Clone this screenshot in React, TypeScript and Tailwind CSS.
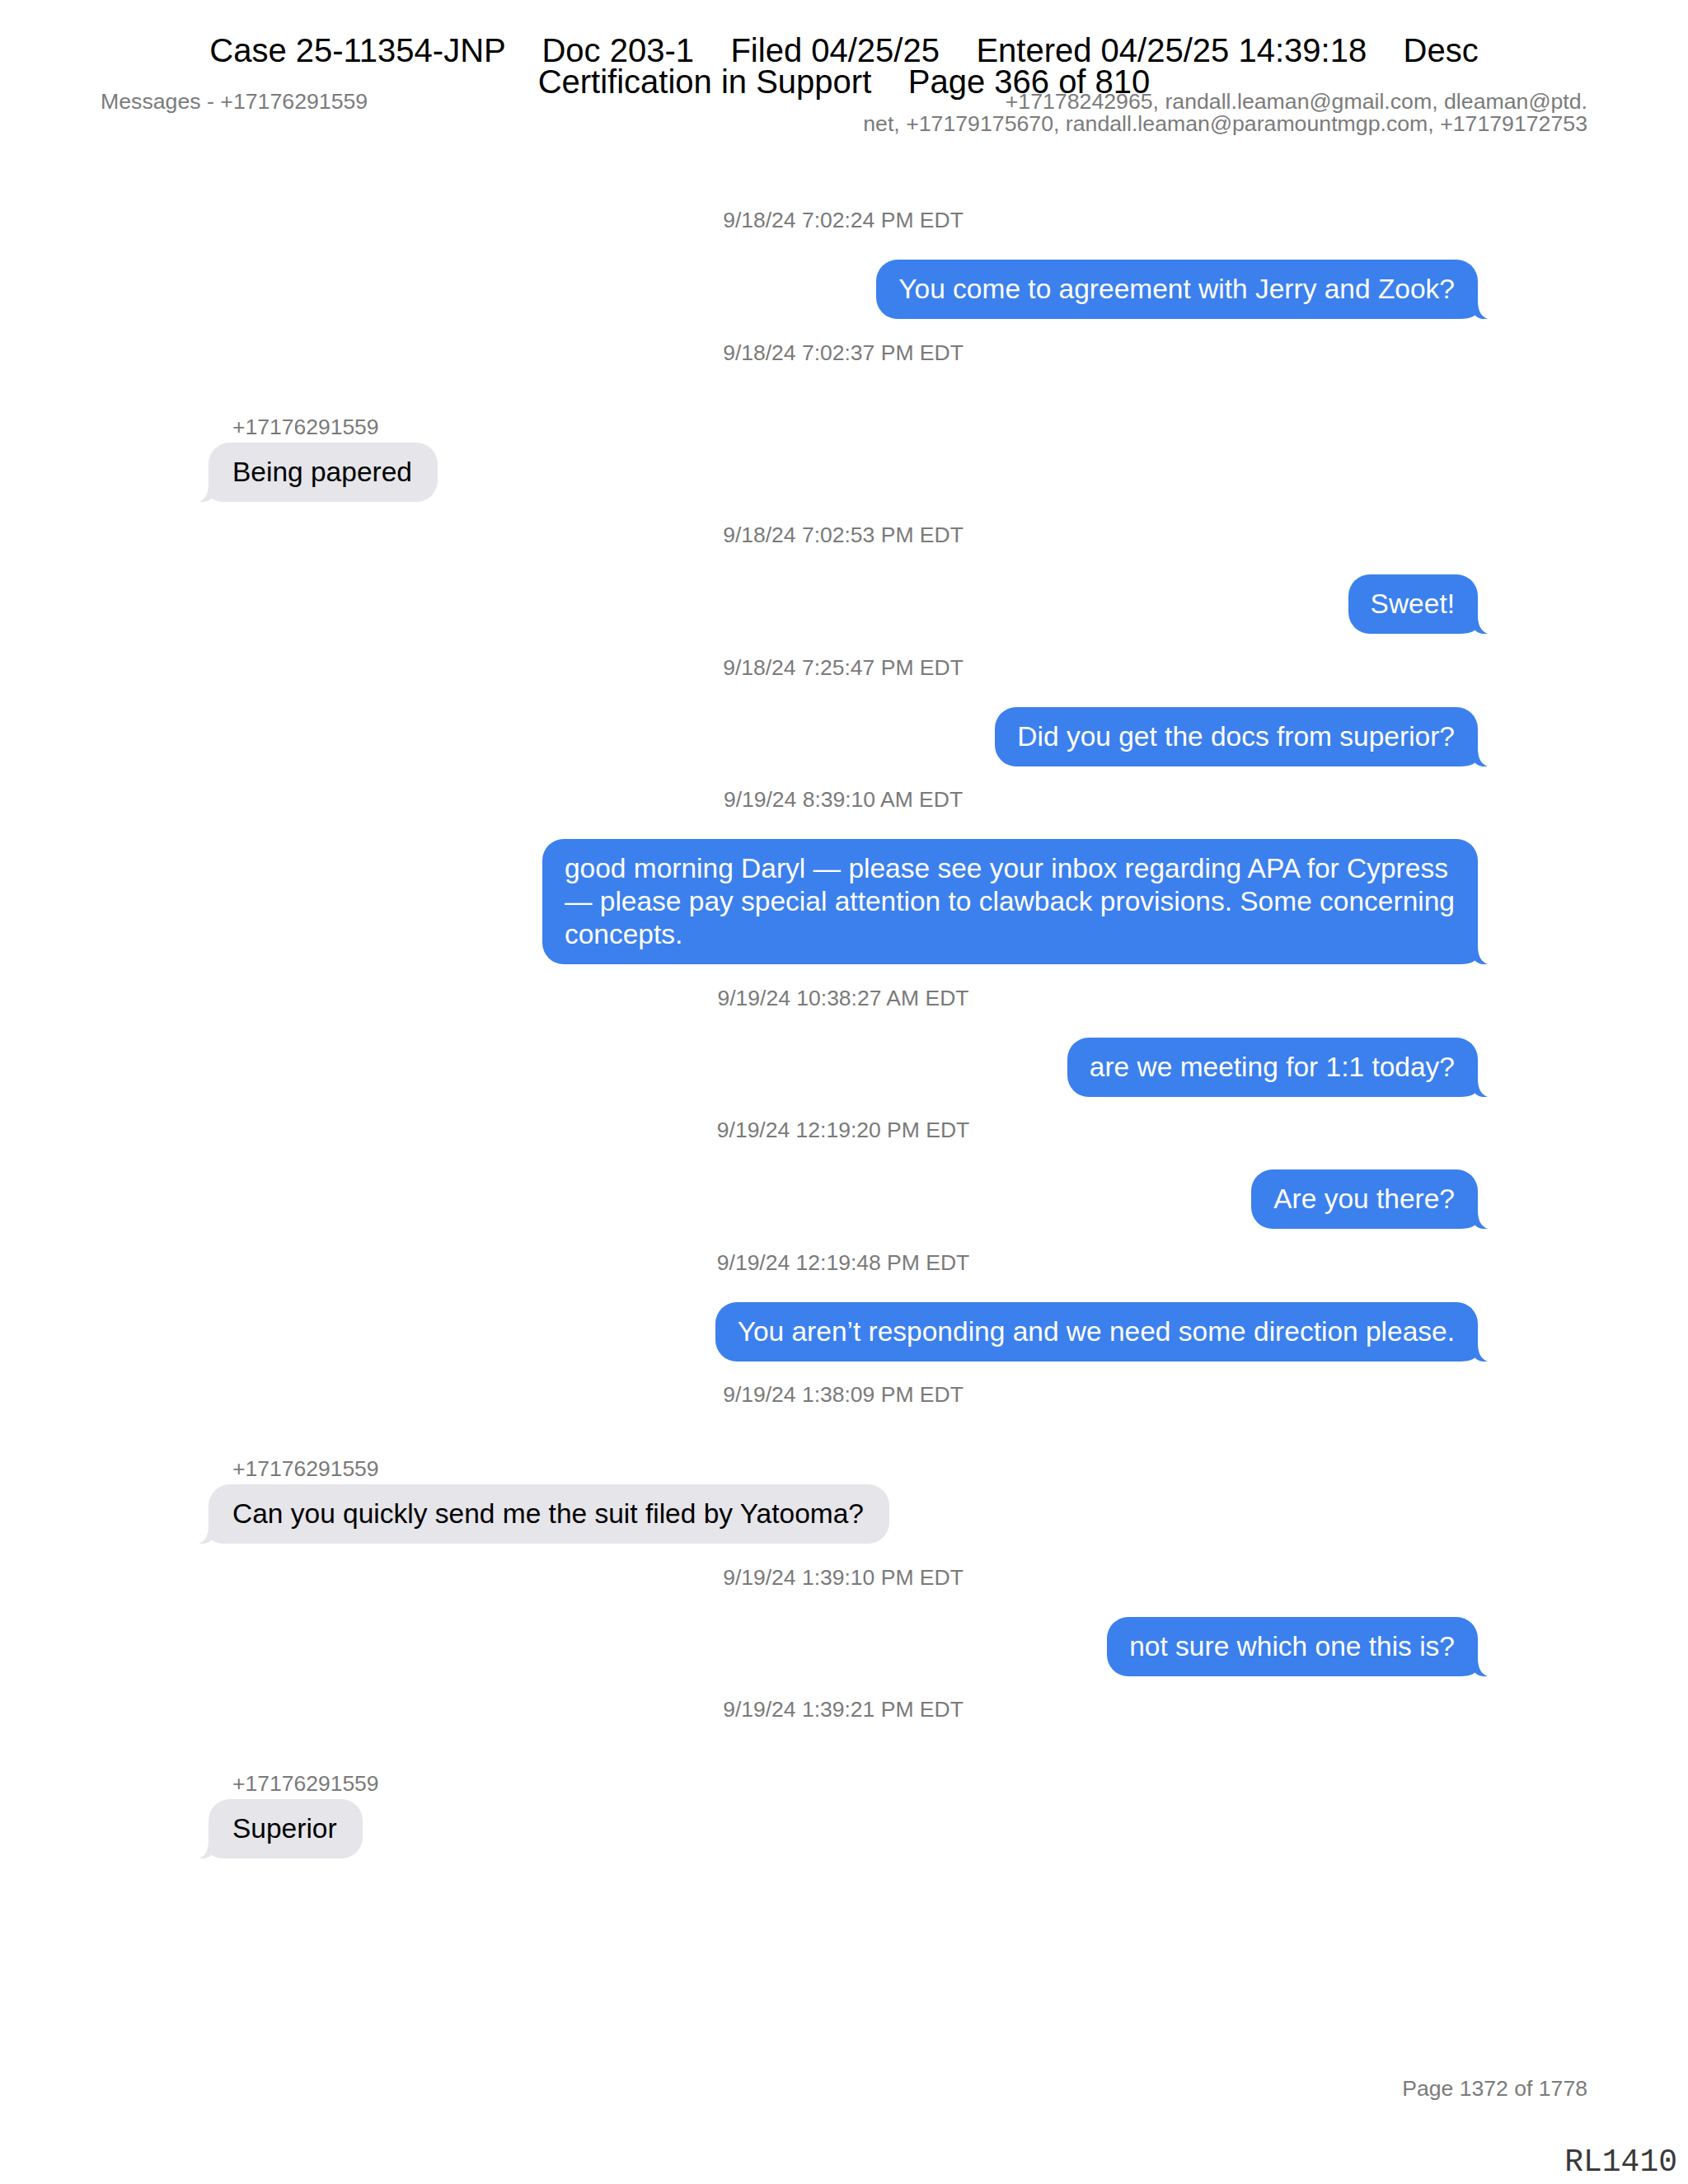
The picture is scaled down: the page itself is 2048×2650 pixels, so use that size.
import React from "react";

type Msg = { ts: string; dir: "in" | "out"; lines: string[] };

const msgs: Msg[] = [
  { ts: "9/18/24 7:02:24 PM EDT", dir: "out", lines: ["You come to agreement with Jerry and Zook?"] },
  { ts: "9/18/24 7:02:37 PM EDT", dir: "in", lines: ["Being papered"] },
  { ts: "9/18/24 7:02:53 PM EDT", dir: "out", lines: ["Sweet!"] },
  { ts: "9/18/24 7:25:47 PM EDT", dir: "out", lines: ["Did you get the docs from superior?"] },
  {
    ts: "9/19/24 8:39:10 AM EDT",
    dir: "out",
    lines: [
      "good morning Daryl — please see your inbox regarding APA for Cypress",
      "— please pay special attention to clawback provisions. Some concerning",
      "concepts.",
    ],
  },
  { ts: "9/19/24 10:38:27 AM EDT", dir: "out", lines: ["are we meeting for 1:1 today?"] },
  { ts: "9/19/24 12:19:20 PM EDT", dir: "out", lines: ["Are you there?"] },
  { ts: "9/19/24 12:19:48 PM EDT", dir: "out", lines: ["You aren’t responding and we need some direction please."] },
  { ts: "9/19/24 1:38:09 PM EDT", dir: "in", lines: ["Can you quickly send me the suit filed by Yatooma?"] },
  { ts: "9/19/24 1:39:10 PM EDT", dir: "out", lines: ["not sure which one this is?"] },
  { ts: "9/19/24 1:39:21 PM EDT", dir: "in", lines: ["Superior"] },
];

function Tail({ color, side }: { color: string; side: "in" | "out" }) {
  return (
    <svg
      width="42"
      height="40"
      viewBox="0 0 42 40"
      className={
        side === "out"
          ? "absolute bottom-0 right-[-12px]"
          : "absolute bottom-0 left-[-12px] -scale-x-100"
      }
    >
      <path
        d="M0,0 H30 V18 C30,30 34,37 42,40 C35,40.8 30,39 26.5,35.5 C22.5,38.8 16,40 9,40 H0 Z"
        fill={color}
      />
    </svg>
  );
}

function Bubble({ m }: { m: Msg }) {
  const out = m.dir === "out";
  const color = out ? "#3b80ed" : "#e5e5ea";
  return (
    <div
      className={
        out
          ? "relative self-end rounded-[26px] bg-[#3b80ed] py-[16px] pl-[27px] pr-[28px] text-white"
          : "relative self-start rounded-[26px] bg-[#e5e5ea] py-[16px] pl-[29px] pr-[31px] text-black"
      }
    >
      <Tail color={color} side={m.dir} />
      <div className="relative whitespace-nowrap text-[33.5px] leading-[40px]">
        {m.lines.map((l, i) => (
          <div key={i}>{l}</div>
        ))}
      </div>
    </div>
  );
}

export default function App() {
  return (
    <div
      className="relative flex min-h-[2650px] w-[2048px] flex-col bg-white"
      style={{ fontFamily: '"Liberation Sans", Arial, sans-serif' }}
    >
      {/* PACER stamp overlay */}
      <div className="pointer-events-none absolute left-0 right-0 top-[42px] z-10 whitespace-pre text-center text-[40px] leading-[38px] text-black">
        <div>{"Case 25-11354-JNP    Doc 203-1    Filed 04/25/25    Entered 04/25/25 14:39:18    Desc"}</div>
        <div>{"Certification in Support    Page 366 of 810"}</div>
      </div>

      {/* page header */}
      <div className="flex justify-between px-[122px] pt-[110px] text-[26.7px] leading-[27px] text-[#7b7b7b]">
        <div>Messages - +17176291559</div>
        <div className="text-right">
          <div>+17178242965, randall.leaman@gmail.com, dleaman@ptd.</div>
          <div>net, +17179175670, randall.leaman@paramountmgp.com, +17179172753</div>
        </div>
      </div>

      {/* chat */}
      <div className="mt-[87px] flex flex-col gap-[24.5px] pl-[253px] pr-[255px]">
        {msgs.map((m, i) => (
          <div key={i} className="flex flex-col">
            <div className="text-center text-[26.5px] leading-[32px] text-[#7a7a7a]">{m.ts}</div>
            {m.dir === "in" ? (
              <>
                <div className="mt-[61px] pl-[29px] text-[26.5px] leading-[26px] text-[#7a7a7a]">
                  +17176291559
                </div>
                <div className="mt-[6px] flex flex-col">
                  <Bubble m={m} />
                </div>
              </>
            ) : (
              <div className="mt-[32px] flex flex-col">
                <Bubble m={m} />
              </div>
            )}
          </div>
        ))}
      </div>

      {/* footer */}
      <div className="mt-auto flex flex-col">
        <div className="pr-[122px] text-right text-[26.6px] leading-[32px] text-[#7b7b7b]">
          Page 1372 of 1778
        </div>
        <div
          className="mt-[55px] pb-[7px] pr-[13px] text-right text-[38px] leading-[38px] text-[#3a3a3a]"
          style={{ fontFamily: '"Liberation Mono", "Courier New", monospace' }}
        >
          RL1410
        </div>
      </div>
    </div>
  );
}
